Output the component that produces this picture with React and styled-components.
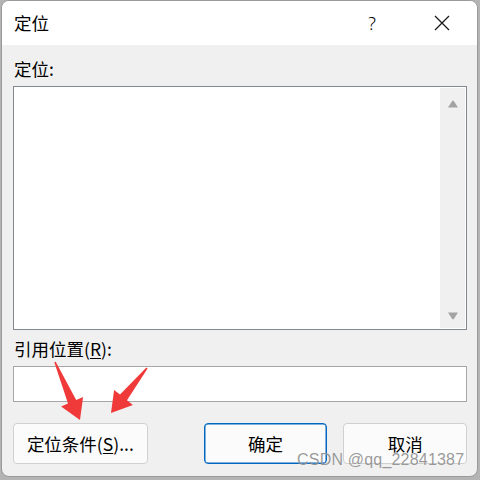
import React from "react";
import styled, { createGlobalStyle } from "styled-components";

const Global = createGlobalStyle`
  html, body { margin: 0; padding: 0; background: #b4b4b4; }
  body { width: 480px; height: 480px; overflow: hidden; }
  * { box-sizing: border-box; }
`;

const Dialog = styled.div`
  position: relative;
  width: 477px;
  height: 477px;
  margin: 0 0 0 1px;
  background: #f0f0f0;
  border: 1px solid #9a9a9a;
  border-radius: 8px;
  overflow: hidden;
  font-family: "Noto Sans CJK SC", "Microsoft YaHei", sans-serif;
  color: #000;
  display: flex;
  flex-direction: column;
`;

const TitleBar = styled.div`
  height: 44px;
  background: #ffffff;
  display: flex;
  align-items: center;
  padding: 0 0 0 12px;
  flex-shrink: 0;
`;

const Title = styled.div`
  flex: 1;
  font-size: 17.5px;
  line-height: 1;
  padding-bottom: 1px;
`;

const TitleButton = styled.div`
  width: 70px;
  height: 44px;
  display: flex;
  align-items: center;
  justify-content: center;
  font-family: "Noto Sans", "DejaVu Sans", sans-serif;
  font-size: 18px;
  font-weight: 300;
`;

const Body = styled.div`
  flex: 1;
  padding: 14px 10px 0 11px;
  display: flex;
  flex-direction: column;
`;

const Label = styled.div`
  font-size: 17.5px;
  line-height: 20px;
  height: 20px;
  margin-bottom: ${(p) => p.mb}px;
  padding-left: 1px;
`;

const U = styled.span`
  text-decoration: underline;
  text-underline-offset: 2px;
  text-decoration-thickness: 1px;
`;

const ListBox = styled.div`
  height: 244px;
  background: #fff;
  border: 1px solid #828790;
  display: flex;
  justify-content: flex-end;
  padding: 1px;
  margin-bottom: 9px;
`;

const ScrollBar = styled.div`
  width: 25px;
  background: #f0f0f0;
  display: flex;
  flex-direction: column;
  justify-content: space-between;
  align-items: center;
  padding: 12px 0 8px;
`;

const Arrow = ({ down }) => (
  <svg width="12" height="8" viewBox="0 0 12 8">
    {down ? (
      <path d="M1 0.5 H11 L6.8 7 Q6 7.8 5.2 7 Z" fill="#a3a3a3" />
    ) : (
      <path d="M1 7.5 H11 L6.8 1 Q6 0.2 5.2 1 Z" fill="#a3a3a3" />
    )}
  </svg>
);

const Input = styled.div`
  height: 36px;
  background: #fff;
  border: 1px solid #a6a6a6;
  margin-bottom: 21px;
`;

const ButtonRow = styled.div`
  display: flex;
  align-items: center;
`;

const Button = styled.div`
  width: ${(p) => p.w}px;
  height: 41px;
  margin-left: ${(p) => p.ml}px;
  background: #fbfbfb;
  border: 1px solid ${(p) => (p.primary ? "#0067c0" : "#d0d0d0")};
  box-shadow: ${(p) => (p.primary ? "inset 0 0 0 0.5px #0067c0" : "none")};
  border-radius: 4px;
  display: flex;
  align-items: center;
  justify-content: center;
  font-size: 17.5px;
  padding-bottom: 1px;
`;

const Overlay = styled.svg`
  position: absolute;
  left: 0;
  top: 0;
  pointer-events: none;
`;

const Watermark = styled.div`
  position: absolute;
  left: 295px;
  top: 450px;
  font-family: "Liberation Sans", Arial, sans-serif;
  font-size: 16px;
  letter-spacing: 0.2px;
  color: rgba(120, 120, 120, 0.75);
  text-shadow: 0 0 1px rgba(255, 255, 255, 0.6);
`;

function arrowPath(x1, y1, x2, y2) {
  const dx = x2 - x1, dy = y2 - y1;
  const len = Math.hypot(dx, dy);
  const ux = dx / len, uy = dy / len;
  const nx = -uy, ny = ux;
  const headLen = 20, headW = 12, neckW = 4.5, tailW = 0.8;
  const bx = x2 - ux * headLen, by = y2 - uy * headLen;
  const pts = [
    [x1 + nx * tailW, y1 + ny * tailW],
    [bx + nx * neckW, by + ny * neckW],
    [bx + nx * headW, by + ny * headW],
    [x2, y2],
    [bx - nx * headW, by - ny * headW],
    [bx - nx * neckW, by - ny * neckW],
    [x1 - nx * tailW, y1 - ny * tailW],
  ];
  return "M" + pts.map((p) => p[0].toFixed(1) + " " + p[1].toFixed(1)).join(" L") + " Z";
}

export default function App() {
  return (
    <>
      <Global />
      <Dialog>
        <TitleBar>
          <Title>定位</Title>
          <TitleButton>?</TitleButton>
          <TitleButton>
            <svg width="16" height="16" viewBox="0 0 16 16">
              <path d="M1 1 L15 15 M15 1 L1 15" stroke="#1a1a1a" strokeWidth="1.3" />
            </svg>
          </TitleButton>
        </TitleBar>
        <Body>
          <Label mb={7}>定位:</Label>
          <ListBox>
            <ScrollBar>
              <Arrow />
              <Arrow down />
            </ScrollBar>
          </ListBox>
          <Label mb={7}>
            引用位置(<U>R</U>):
          </Label>
          <Input />
          <ButtonRow>
            <Button w={135} ml={0}>
              定位条件(<U>S</U>)...
            </Button>
            <Button w={124} ml={56} primary>
              确定
            </Button>
            <Button w={124} ml={16}>
              取消
            </Button>
          </ButtonRow>
        </Body>
        <Watermark>CSDN @qq_22841387</Watermark>
      </Dialog>
      <Overlay width="480" height="480">
        <path d={arrowPath(55, 362, 80, 420)} fill="#f03a3a" />
        <path d={arrowPath(147, 368, 111, 413)} fill="#f03a3a" />
      </Overlay>
    </>
  );
}
